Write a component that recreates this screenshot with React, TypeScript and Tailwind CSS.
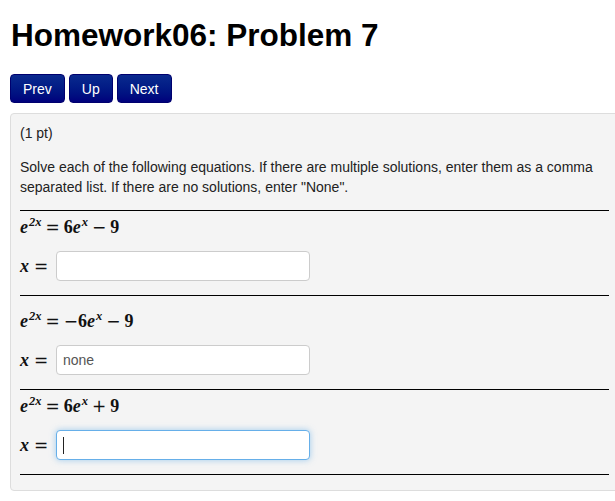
const sans = { fontFamily: '"Liberation Sans", Arial, sans-serif' };
const serif = { fontFamily: '"Liberation Serif", "Times New Roman", "DejaVu Serif", serif' };
const opFont = { fontFamily: '"DejaVu Sans", sans-serif' };

// ── math bits ──

function Var({ children }: { children: React.ReactNode }) {
  return <span className="italic">{children}</span>;
}

function Sup({ children }: { children: React.ReactNode }) {
  return (
    <span className="relative top-[-7px] ml-px text-[12.5px] leading-none align-baseline italic">
      {children}
    </span>
  );
}

function Op({ children }: { children: React.ReactNode }) {
  return (
    <span className="mx-[4px] font-normal text-[17px]" style={opFont}>
      {children}
    </span>
  );
}

function MathLine({ sign, op }: { sign: string; op: string }) {
  return (
    <div className="h-[32px] leading-[32px] text-[18px] font-semibold text-[#111]" style={serif}>
      <Var>e</Var>
      <Sup>2x</Sup>
      <Op>=</Op>
      {sign && (
        <span className="font-normal text-[17px]" style={opFont}>
          {sign}
        </span>
      )}
      6<Var>e</Var>
      <Sup>x</Sup>
      <Op>{op}</Op>9
    </div>
  );
}

// ── answer row ──

function AnswerRow({ value, focused }: { value?: string; focused?: boolean }) {
  return (
    <div className="mt-[8px] flex items-center">
      <div className="w-[36px] text-[18px] font-semibold text-[#111]" style={serif}>
        <span className="italic">x</span>
        <span className="ml-[5px] font-normal text-[17px]" style={opFont}>
          =
        </span>
      </div>
      <div
        className={
          "h-[30px] w-[254px] rounded-[4px] border bg-white px-[6px] flex items-center text-[14px] text-[#555] " +
          (focused
            ? "border-[#66afe9] shadow-[0_0_6px_rgba(102,175,233,0.6)]"
            : "border-[#ccc]")
        }
      >
        {value}
        {focused && <span className="h-[17px] w-px bg-[#222]" />}
      </div>
    </div>
  );
}

function Section({
  sign,
  op,
  value,
  focused,
  padTop,
}: {
  sign: string;
  op: string;
  value?: string;
  focused?: boolean;
  padTop?: boolean;
}) {
  return (
    <div className={"border-t border-black pb-[14px] " + (padTop ? "pt-[9px]" : "")}>
      <MathLine sign={sign} op={op} />
      <AnswerRow value={value} focused={focused} />
    </div>
  );
}

export default function App() {
  return (
    <div className="w-[615px] h-[501px] overflow-hidden bg-white text-black" style={sans}>
      <div className="pl-[11px] pt-[16px]">
        <h1 className="text-[31.5px] leading-[38px] font-bold">Homework06: Problem 7</h1>
      </div>

      <div className="mt-[20px] ml-[10px] flex gap-[4px]">
        {["Prev", "Up", "Next"].map((l) => (
          <button
            key={l}
            className="h-[29px] px-[12px] rounded-[4px] border border-[#00006e] bg-gradient-to-b from-[#0b2a8e] to-[#00007c] text-white text-[14px] leading-none"
          >
            {l}
          </button>
        ))}
      </div>

      <div className="mt-[10px] ml-[10px] w-[610px] rounded-[4px] border border-[#ddd] bg-[#f4f4f4] px-[9px] pt-[9px] pb-[15px]">
        <p className="text-[14px] leading-[20px] text-[#222]">(1 pt)</p>
        <p className="mt-[14px] w-[580px] text-[14px] leading-[20px] text-[#222]">
          Solve each of the following equations. If there are multiple solutions, enter them as a comma
          separated list. If there are no solutions, enter "None".
        </p>
        <div className="mt-[13px] w-[589px]">
          <Section sign="" op="−" />
          <Section sign="−" op="−" value="none" padTop />
          <Section sign="" op="+" focused />
          <div className="border-t border-black" />
        </div>
      </div>
    </div>
  );
}
